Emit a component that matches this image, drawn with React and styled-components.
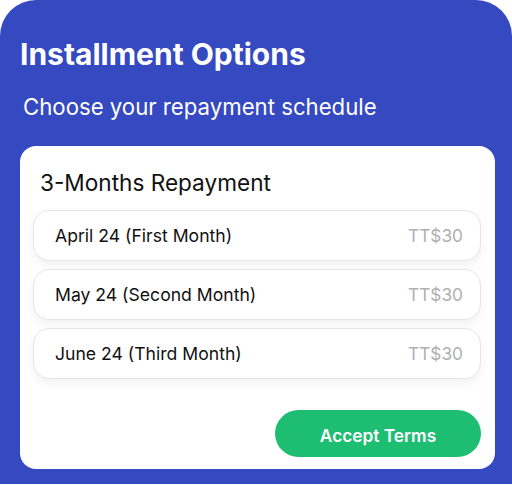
import React from "react";
import styled, { createGlobalStyle } from "styled-components";

const Global = createGlobalStyle`
  html, body { margin: 0; padding: 0; background: #ffffff; }
  body { font-family: Inter, "Noto Sans", sans-serif; }
  * { box-sizing: border-box; }
`;

const Panel = styled.div`
  width: 512px;
  height: 484px;
  background: #3549c1;
  border-radius: 36px 36px 0 0;
  padding: 36px 17px 15px 20px;
  display: flex;
  flex-direction: column;
`;

const Title = styled.h1`
  margin: 0;
  font-size: 30px;
  line-height: 36px;
  font-weight: 700;
  color: #ffffff;
`;

const Subtitle = styled.p`
  margin: 21px 0 0 3px;
  font-size: 22.2px;
  line-height: 28px;
  font-weight: 400;
  color: #ffffff;
`;

const Card = styled.div`
  margin-top: 25px;
  flex: 1;
  background: #ffffff;
  border-radius: 16px;
  padding: 23px 14px 12px 13px;
  display: flex;
  flex-direction: column;
`;

const CardTitle = styled.h2`
  margin: 0 0 13px 7px;
  font-size: 22.6px;
  line-height: 28px;
  font-weight: 400;
  color: #111111;
`;

const List = styled.div`
  display: flex;
  flex-direction: column;
  gap: 8px;
`;

const Row = styled.div`
  height: 51px;
  border: 1px solid #e6e6e6;
  border-radius: 16px;
  background: #ffffff;
  box-shadow: 0 4px 10px rgba(0, 0, 0, 0.06);
  display: flex;
  align-items: center;
  justify-content: space-between;
  padding: 0 17px 0 21px;
`;

const Label = styled.span`
  font-size: 17.6px;
  color: #111111;
`;

const Price = styled.span`
  font-size: 17.3px;
  color: #b0b0b0;
`;

const Footer = styled.div`
  margin-top: auto;
  display: flex;
  justify-content: flex-end;
`;

const Button = styled.button`
  width: 206px;
  height: 47px;
  border: none;
  border-radius: 24px;
  background: #1dbd72;
  color: #ffffff;
  font-family: Inter, "Noto Sans", sans-serif;
  font-size: 17.3px;
  font-weight: 600;
  padding: 3px 0 0;
  cursor: pointer;
`;

const rows = [
  { label: "April 24 (First Month)", price: "TT$30" },
  { label: "May 24 (Second Month)", price: "TT$30" },
  { label: "June 24 (Third Month)", price: "TT$30" },
];

export default function App() {
  return (
    <>
      <Global />
      <Panel>
        <Title>Installment Options</Title>
        <Subtitle>Choose your repayment schedule</Subtitle>
        <Card>
          <CardTitle>3-Months Repayment</CardTitle>
          <List>
            {rows.map((r) => (
              <Row key={r.label}>
                <Label>{r.label}</Label>
                <Price>{r.price}</Price>
              </Row>
            ))}
          </List>
          <Footer>
            <Button>Accept Terms</Button>
          </Footer>
        </Card>
      </Panel>
    </>
  );
}
